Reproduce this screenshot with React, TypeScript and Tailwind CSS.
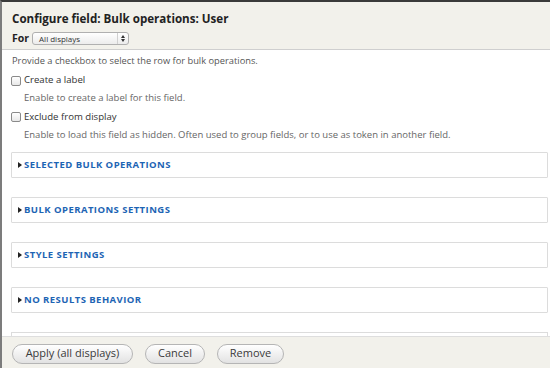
import React from "react";

const font = { fontFamily: '"Open Sans", "DejaVu Sans", sans-serif' };

function Fieldset({ title }: { title: string }) {
  return (
    <div className="ml-[9px] mr-[2px] h-[26px] border border-[#dcdcdc] rounded-[1px] flex items-center pl-[6px] shrink-0">
      <svg width="4" height="6" viewBox="0 0 4 6" className="mr-[2px]">
        <path d="M0 0 L4 3 L0 6 Z" fill="#222" />
      </svg>
      <span className="text-[9.5px] font-bold tracking-[0.45px] text-[#1d64b4] leading-none">{title}</span>
    </div>
  );
}

export default function App() {
  return (
    <div
      style={font}
      className="w-[550px] h-[368px] bg-white border-t-2 border-l-2 border-t-[#3a3a3a] border-l-[#7c7c7c] flex flex-col overflow-hidden"
    >
      <div className="h-[48px] shrink-0 bg-[#f2f1eb] border-b border-[#cfcfcf] pl-[10px] flex flex-col">
        <div className="mt-[8px] h-[17px] shrink-0 flex items-center text-[11.6px] font-bold text-[#222] leading-none">
          Configure field: Bulk operations: User
        </div>
        <div className="mt-[4px] shrink-0 flex items-center">
          <span className="text-[10.5px] font-bold text-[#222]">For</span>
          <div className="ml-[3px] w-[97px] h-[13px] rounded-[3px] border border-[#b0b0b0] bg-gradient-to-b from-white to-[#ececec] flex items-center">
            <span className="ml-[6px] text-[8px] text-[#333] leading-none flex-1">All displays</span>
            <div className="w-[11px] h-full border-l border-[#d0d0d0] flex flex-col items-center justify-center gap-[1px]">
              <svg width="4" height="3" viewBox="0 0 4 3"><path d="M0 3 L2 0 L4 3 Z" fill="#333" /></svg>
              <svg width="4" height="3" viewBox="0 0 4 3"><path d="M0 0 L2 3 L4 0 Z" fill="#333" /></svg>
            </div>
          </div>
        </div>
      </div>

      <div className="flex-1 min-h-0 overflow-hidden flex flex-col">
        <div className="shrink-0 ml-[10px] mt-[1px] h-[20px] flex items-center text-[9.3px] text-[#555]">
          Provide a checkbox to select the row for bulk operations.
        </div>
        <div className="shrink-0 flex items-center h-[19px]">
          <div className="ml-[9px] w-[10px] h-[10px] rounded-[2px] border border-[#8a8a8a] bg-gradient-to-b from-white to-[#e8e8e8]" />
          <span className="ml-[3px] text-[9.6px] text-[#333]">Create a label</span>
        </div>
        <div className="shrink-0 ml-[22px] h-[17px] flex items-center text-[9.5px] text-[#666]">
          Enable to create a label for this field.
        </div>
        <div className="shrink-0 flex items-center h-[20px]">
          <div className="ml-[9px] w-[10px] h-[10px] rounded-[2px] border border-[#8a8a8a] bg-gradient-to-b from-white to-[#e8e8e8]" />
          <span className="ml-[3px] text-[9.6px] text-[#333]">Exclude from display</span>
        </div>
        <div className="shrink-0 ml-[22px] h-[16px] flex items-center text-[9.5px] text-[#666]">
          Enable to load this field as hidden. Often used to group fields, or to use as token in another field.
        </div>
        <div className="shrink-0 flex flex-col gap-[19px] mt-[9px]">
          <Fieldset title="SELECTED BULK OPERATIONS" />
          <Fieldset title="BULK OPERATIONS SETTINGS" />
          <Fieldset title="STYLE SETTINGS" />
          <Fieldset title="NO RESULTS BEHAVIOR" />
          <div className="ml-[9px] mr-[2px] h-[26px] border border-[#dcdcdc] shrink-0" />
        </div>
      </div>

      <div className="h-[32px] shrink-0 bg-[#f2f1eb] border-t border-[#dedede] pl-[10px] flex items-center gap-[12px] pt-[2px]">
        <div className="w-[121px] h-[20px] rounded-full border border-[#b5b5b5] bg-gradient-to-b from-white to-[#e2e2e2] flex items-center justify-center text-[11px] text-[#3a3a3a]">
          Apply (all displays)
        </div>
        <div className="w-[60px] h-[20px] rounded-full border border-[#b5b5b5] bg-gradient-to-b from-white to-[#e2e2e2] flex items-center justify-center text-[11px] text-[#3a3a3a]">
          Cancel
        </div>
        <div className="w-[67px] h-[20px] rounded-full border border-[#b5b5b5] bg-gradient-to-b from-white to-[#e2e2e2] flex items-center justify-center text-[11px] text-[#3a3a3a]">
          Remove
        </div>
      </div>
    </div>
  );
}
